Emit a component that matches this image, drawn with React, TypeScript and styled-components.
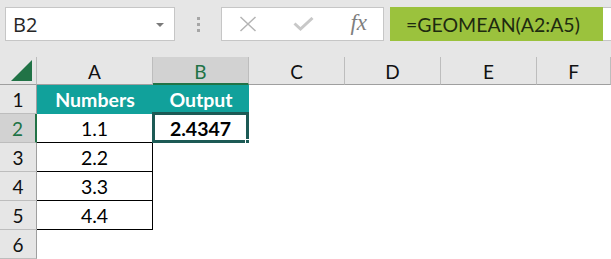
import React from "react";
import styled, { createGlobalStyle } from "styled-components";

const GlobalStyle = createGlobalStyle`
    html, body {
        margin: 0;
        padding: 0;
        background: #ffffff;
        overflow: hidden;
    }
    body {
        font-family: Lato, "Liberation Sans", sans-serif;
    }
`;

const COLS = [
    { key: "A", width: 116 },
    { key: "B", width: 96 },
    { key: "C", width: 96 },
    { key: "D", width: 96 },
    { key: "E", width: 96 },
    { key: "F", width: 74 },
];

interface CellData {
    text?: string;
    kind?: "head" | "box" | "active" | "plain";
}

const ROWS: CellData[][] = [
    [{ text: "Numbers", kind: "head" }, { text: "Output", kind: "head" }],
    [{ text: "1.1", kind: "box" }, { text: "2.4347", kind: "active" }],
    [{ text: "2.2", kind: "box" }],
    [{ text: "3.3", kind: "box" }],
    [{ text: "4.4", kind: "box" }],
    [],
];

const App: React.FC = () => {
    return (
        <Sheet>
            <GlobalStyle />
            <Toolbar>
                <NameBox>
                    <span>B2</span>
                    <DropArrow />
                </NameBox>
                <Grip>
                    <i />
                    <i />
                    <i />
                </Grip>
                <IconBox>
                    <svg width="18" height="16" viewBox="0 0 18 16">
                        <path d="M1.5 1 L16.5 15 M16.5 1 L1.5 15" stroke="#b4b4b4" strokeWidth="1.5" fill="none" />
                    </svg>
                    <svg width="21" height="14" viewBox="0 0 21 14">
                        <path d="M1.5 6.5 L7.5 12 L19.5 1" stroke="#c8c8c8" strokeWidth="3" fill="none" />
                    </svg>
                    <Fx>fx</Fx>
                </IconBox>
                <FormulaBox>
                    <Formula>=GEOMEAN(A2:A5)</Formula>
                </FormulaBox>
            </Toolbar>
            <HeaderRow>
                <Corner>
                    <svg width="22" height="21" viewBox="0 0 22 21">
                        <path d="M21 0 L21 21 L0 21 Z" fill="#217346" />
                    </svg>
                </Corner>
                {COLS.map((c) => (
                    <ColHead key={c.key} $w={c.width} $active={c.key === "B"}>
                        {c.key}
                    </ColHead>
                ))}
            </HeaderRow>
            {ROWS.map((row, ri) => (
                <Row key={ri}>
                    <RowHead $active={ri === 1}>{ri + 1}</RowHead>
                    {COLS.map((c, ci) => {
                        const cell = row[ci] || {};
                        return (
                            <Cell key={c.key} $w={c.width} $kind={cell.kind || "plain"}>
                                {cell.text}
                            </Cell>
                        );
                    })}
                </Row>
            ))}
        </Sheet>
    );
};

const Sheet = styled.div`
    width: 611px;
    height: 259px;
    overflow: hidden;
    background: #ffffff;
`;

const Toolbar = styled.div`
    height: 57px;
    box-sizing: border-box;
    background: #e6e6e6;
    display: flex;
    align-items: flex-start;
    padding-top: 7px;
    padding-left: 5px;
`;

const NameBox = styled.div`
    width: 170px;
    height: 34px;
    box-sizing: border-box;
    background: #ffffff;
    border: 1px solid #c6c6c6;
    display: flex;
    align-items: center;
    justify-content: space-between;
    padding: 0 10px 0 7px;
    font-family: "Open Sans", "Noto Sans", sans-serif;
    font-size: 20px;
    color: #262626;
`;

const DropArrow = styled.span`
    width: 0;
    height: 0;
    border-left: 4px solid transparent;
    border-right: 4px solid transparent;
    border-top: 4px solid #7a7a7a;
    margin-top: 1px;
`;

const Grip = styled.div`
    width: 46px;
    height: 34px;
    display: flex;
    flex-direction: column;
    align-items: center;
    justify-content: center;
    gap: 3px;
    i {
        display: block;
        width: 3px;
        height: 3px;
        background: #a6a6a6;
    }
`;

const IconBox = styled.div`
    width: 163px;
    height: 34px;
    box-sizing: border-box;
    background: #ffffff;
    border: 1px solid #c6c6c6;
    display: flex;
    align-items: center;
    justify-content: space-between;
    padding: 0 16px 0 17px;
`;

const Fx = styled.span`
    font-family: "Liberation Serif", serif;
    font-style: italic;
    font-size: 23px;
    color: #7f7f7f;
    margin-top: -2px;
`;

const FormulaBox = styled.div`
    flex: 1;
    height: 34px;
    margin-left: 6px;
    background: #ffffff;
    border-top: 1px solid #c6c6c6;
    border-bottom: 1px solid #c6c6c6;
    box-sizing: border-box;
    display: flex;
`;

const Formula = styled.div`
    width: 213px;
    background: #9bc23d;
    margin: -1px 0;
    display: flex;
    align-items: center;
    padding-left: 16px;
    box-sizing: border-box;
    font-family: Lato, "Liberation Sans", sans-serif;
    font-size: 19.5px;
    color: #1e2a10;
`;

const HeaderRow = styled.div`
    display: flex;
    height: 28px;
    background: #e6e6e6;
`;

const Corner = styled.div`
    width: 37px;
    box-sizing: border-box;
    border-right: 1px solid #bdbdbd;
    border-bottom: 1px solid #9f9f9f;
    display: flex;
    align-items: flex-end;
    justify-content: flex-end;
    padding: 0 3px 3px 0;
`;

const ColHead = styled.div<{ $w: number; $active?: boolean }>`
    width: ${(p) => p.$w}px;
    box-sizing: border-box;
    border-right: 1px solid #bdbdbd;
    border-bottom: ${(p) => (p.$active ? "2px solid #217346" : "1px solid #9f9f9f")};
    background: ${(p) => (p.$active ? "#d2d2d2" : "#e6e6e6")};
    color: ${(p) => (p.$active ? "#217346" : "#111111")};
    display: flex;
    align-items: center;
    justify-content: center;
    font-size: 19px;
    padding-top: 2px;
`;

const Row = styled.div`
    display: flex;
    height: 29px;
`;

const RowHead = styled.div<{ $active?: boolean }>`
    width: 37px;
    box-sizing: border-box;
    background: ${(p) => (p.$active ? "#d2d2d2" : "#e6e6e6")};
    color: ${(p) => (p.$active ? "#217346" : "#111111")};
    border-bottom: 1px solid #bdbdbd;
    border-right: ${(p) => (p.$active ? "2px solid #217346" : "1px solid #9f9f9f")};
    display: flex;
    align-items: center;
    justify-content: center;
    font-size: 19px;
`;

const Cell = styled.div<{ $w: number; $kind: string }>`
    position: relative;
    width: ${(p) => p.$w}px;
    box-sizing: border-box;
    display: flex;
    align-items: center;
    justify-content: center;
    font-size: 19.5px;
    color: #000000;
    background: ${(p) => (p.$kind === "head" ? "#11a19b" : "#ffffff")};
    font-weight: ${(p) => (p.$kind === "head" || p.$kind === "active" ? 700 : 400)};
    ${(p) => p.$kind === "head" && "color: #ffffff;"}
    ${(p) =>
        (p.$kind === "box" || p.$kind === "active") &&
        `
        border-right: 1px solid #000000;
        border-bottom: 1px solid #000000;
    `}
    ${(p) =>
        p.$kind === "active" &&
        `
        &::before {
            content: "";
            position: absolute;
            left: -1px;
            top: -2px;
            right: -1px;
            bottom: -1px;
            border: 3px solid #1c5a55;
        }
        &::after {
            content: "";
            position: absolute;
            right: -4px;
            bottom: -4px;
            width: 5px;
            height: 5px;
            background: #1c5a55;
            border: 1px solid #ffffff;
        }
    `}
`;

export default App;
